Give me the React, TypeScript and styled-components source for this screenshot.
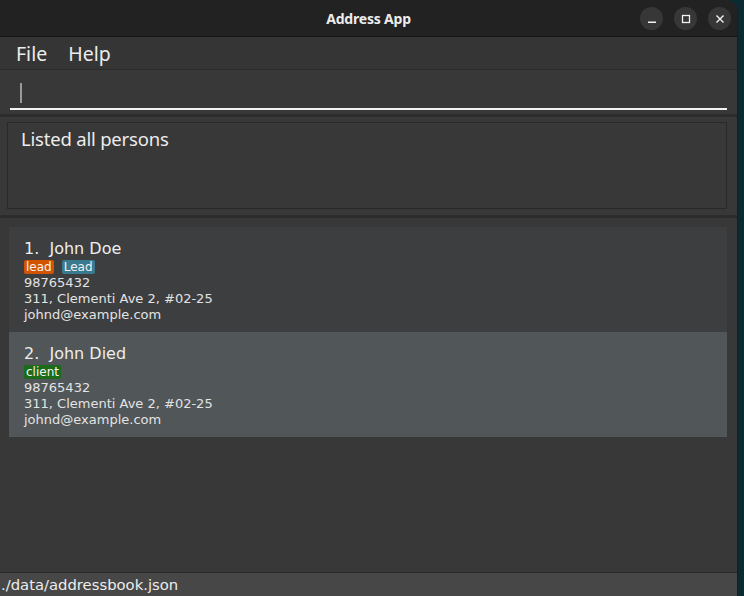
import React from "react";
import styled, { createGlobalStyle } from "styled-components";

const Global = createGlobalStyle`
  html, body { margin: 0; padding: 0; background: #0c2a32; overflow: hidden; }
  #root { width: 744px; height: 596px; }
`;

const Desktop = styled.div`
  width: 744px;
  height: 596px;
  display: flex;
  background: #0c2a32;
`;

const Window = styled.div`
  width: 737px;
  height: 596px;
  display: flex;
  flex-direction: column;
  border-right: 1px solid #1c1c1c;
  border-top-right-radius: 12px;
  overflow: hidden;
  background: #383838;
`;

const TitleBar = styled.div`
  height: 36px;
  flex: none;
  background: #222222;
  border-bottom: 1px solid #141414;
  display: flex;
  align-items: center;
  position: relative;
`;

const Title = styled.div`
  flex: 1;
  text-align: center;
  color: #ececec;
  font: 700 14px "Noto Sans", sans-serif;
  letter-spacing: -0.2px;
`;

const Controls = styled.div`
  position: absolute;
  right: 6px;
  top: 7px;
  display: flex;
  gap: 11px;
`;

const CtlBtn = styled.div`
  width: 23px;
  height: 23px;
  border-radius: 50%;
  background: #373737;
  display: flex;
  align-items: center;
  justify-content: center;
`;

const MenuBar = styled.div`
  height: 32px;
  flex: none;
  background: #353535;
  border-bottom: 1px solid #2a2a2a;
  display: flex;
  align-items: center;
  padding-left: 16px;
  gap: 21px;
`;

const MenuItem = styled.span`
  color: #ececec;
  font: 400 19.5px "Noto Sans", sans-serif;
`;

const CommandPane = styled.div`
  height: 44px;
  flex: none;
  background: #383838;
  padding: 0 10px 4px 10px;
  display: flex;
  flex-direction: column;
  justify-content: flex-end;
  box-sizing: border-box;
`;

const CommandField = styled.div`
  height: 32px;
  border-bottom: 2px solid #f2f2f2;
  display: flex;
  align-items: center;
  padding-left: 10px;
  box-sizing: border-box;
`;

const Caret = styled.div`
  width: 2px;
  height: 20px;
  background: #9a9a9a;
`;

const Divider = styled.div`
  height: 3px;
  flex: none;
  background: #2c2c2c;
`;

const ResultPane = styled.div`
  height: 98px;
  flex: none;
  padding: 5px 10px 6px 7px;
  box-sizing: border-box;
  background: #383838;
  display: flex;
`;

const ResultBox = styled.div`
  flex: 1;
  border: 1px solid #292929;
  padding: 3px 13px;
  color: #ececec;
  font: 400 18.5px "Noto Sans", sans-serif;
  letter-spacing: -0.2px;
`;

const ListPane = styled.div`
  flex: 1;
  background: #383838;
  padding: 9px 10px 0 9px;
  display: flex;
  flex-direction: column;
`;

const Card = styled.div<{ $alt?: boolean }>`
  height: 105px;
  box-sizing: border-box;
  background: ${(p) => (p.$alt ? "#515658" : "#3d3e40")};
  padding: 12px 15px 0;
  display: flex;
  flex-direction: column;
  font-family: "DejaVu Sans", sans-serif;
  color: #e6e6e6;
`;

const Name = styled.div`
  font-size: 16px;
  line-height: 20px;
  white-space: pre;
  color: #ededed;
`;

const Tags = styled.div`
  display: flex;
  gap: 8px;
  margin: 1px 0 1px;
`;

const Tag = styled.span<{ $bg: string }>`
  background: ${(p) => p.$bg};
  color: #f4f4f4;
  font-size: 12px;
  line-height: 14px;
  padding: 0 2px;
  border-radius: 2px;
`;

const Detail = styled.div`
  font-size: 13px;
  line-height: 16px;
  color: #e3e3e3;
`;

const StatusBar = styled.div`
  height: 24px;
  flex: none;
  box-sizing: border-box;
  background: #474747;
  border-top: 1px solid #2a2a2a;
  display: flex;
  align-items: center;
  padding-left: 1px;
  color: #ededed;
  font: 400 14.8px "DejaVu Sans", sans-serif;
`;

type Person = { name: string; tags: { label: string; color: string }[] };

const persons: Person[] = [
  { name: "John Doe", tags: [{ label: "lead", color: "#d35400" }, { label: "Lead", color: "#3a7a90" }] },
  { name: "John Died", tags: [{ label: "client", color: "#1a6b1a" }] },
];

export default function App() {
  return (
    <>
      <Global />
      <Desktop>
        <Window>
          <TitleBar>
            <Title>Address App</Title>
            <Controls>
              <CtlBtn>
                <svg width="10" height="10" viewBox="0 0 10 10">
                  <rect x="1" y="7.5" width="8" height="1.5" fill="#f2f2f2" />
                </svg>
              </CtlBtn>
              <CtlBtn>
                <svg width="10" height="10" viewBox="0 0 10 10">
                  <rect x="1.5" y="1.5" width="7" height="7" fill="none" stroke="#f2f2f2" strokeWidth="1.3" />
                </svg>
              </CtlBtn>
              <CtlBtn>
                <svg width="10" height="10" viewBox="0 0 10 10">
                  <path d="M1.5 1.5 L8.5 8.5 M8.5 1.5 L1.5 8.5" stroke="#f2f2f2" strokeWidth="1.4" />
                </svg>
              </CtlBtn>
            </Controls>
          </TitleBar>
          <MenuBar>
            <MenuItem>File</MenuItem>
            <MenuItem>Help</MenuItem>
          </MenuBar>
          <CommandPane>
            <CommandField>
              <Caret />
            </CommandField>
          </CommandPane>
          <Divider />
          <ResultPane>
            <ResultBox>Listed all persons</ResultBox>
          </ResultPane>
          <Divider />
          <ListPane>
            {persons.map((p, i) => (
              <Card key={p.name} $alt={i % 2 === 1}>
                <Name>{`${i + 1}.  ${p.name}`}</Name>
                <Tags>
                  {p.tags.map((t) => (
                    <Tag key={t.label} $bg={t.color}>{t.label}</Tag>
                  ))}
                </Tags>
                <Detail>98765432</Detail>
                <Detail>311, Clementi Ave 2, #02-25</Detail>
                <Detail>johnd@example.com</Detail>
              </Card>
            ))}
          </ListPane>
          <StatusBar>./data/addressbook.json</StatusBar>
        </Window>
      </Desktop>
    </>
  );
}
